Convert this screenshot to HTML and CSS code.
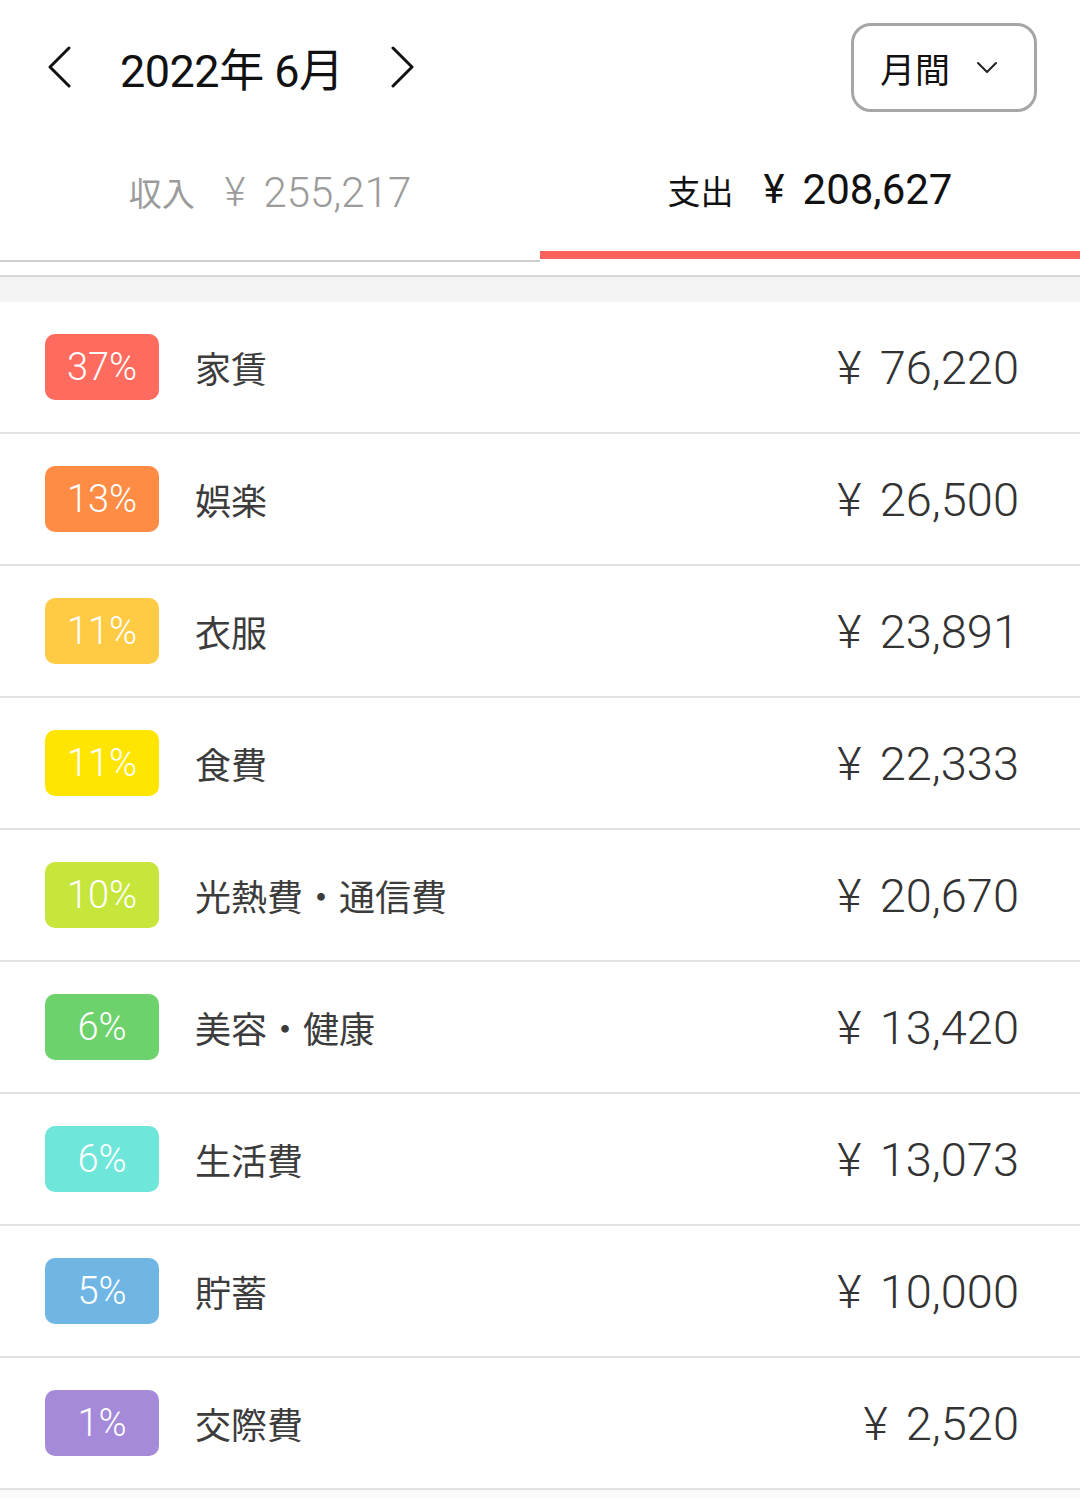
FILE: index.html
```html
<!DOCTYPE html>
<html lang="ja">
<head>
<meta charset="utf-8">
<title>支出</title>
<link rel="stylesheet" href="styles.css">
</head>
<body>
<div class="app">
  <header class="header">
    <div class="month-nav">
      <button class="nav-btn" aria-label="前月">
        <svg width="26" height="42" viewBox="0 0 26 42"><polyline points="23,2 4,21 23,40" fill="none" stroke="#111" stroke-width="3" stroke-linecap="round" stroke-linejoin="round"/></svg>
      </button>
      <div class="month-title">2022年 6月</div>
      <button class="nav-btn" aria-label="翌月">
        <svg width="26" height="42" viewBox="0 0 26 42"><polyline points="3,2 22,21 3,40" fill="none" stroke="#111" stroke-width="3" stroke-linecap="round" stroke-linejoin="round"/></svg>
      </button>
    </div>
    <button class="period-select">
      <span class="period-label">月間</span>
      <svg width="22" height="13" viewBox="0 0 22 13"><polyline points="2,2 11,11 20,2" fill="none" stroke="#222" stroke-width="2" stroke-linecap="round" stroke-linejoin="round"/></svg>
    </button>
  </header>

  <nav class="tabs">
    <div class="tab">
      <span class="tab-label">収入</span><span class="yen tab-yen">¥</span><span class="tab-amount">255,217</span>
    </div>
    <div class="tab tab-active">
      <span class="tab-label">支出</span><span class="yen tab-yen">¥</span><span class="tab-amount">208,627</span>
    </div>
  </nav>

  <div class="divider-band"></div>

  <ul class="list">
    <li class="row"><span class="badge c1">37%</span><span class="name">家賃</span><span class="amount"><span class="yen">¥</span>76,220</span></li>
    <li class="row"><span class="badge c2">13%</span><span class="name">娯楽</span><span class="amount"><span class="yen">¥</span>26,500</span></li>
    <li class="row"><span class="badge c3">11%</span><span class="name">衣服</span><span class="amount"><span class="yen">¥</span>23,891</span></li>
    <li class="row"><span class="badge c4">11%</span><span class="name">食費</span><span class="amount"><span class="yen">¥</span>22,333</span></li>
    <li class="row"><span class="badge c5">10%</span><span class="name">光熱費・通信費</span><span class="amount"><span class="yen">¥</span>20,670</span></li>
    <li class="row"><span class="badge c6">6%</span><span class="name">美容・健康</span><span class="amount"><span class="yen">¥</span>13,420</span></li>
    <li class="row"><span class="badge c7">6%</span><span class="name">生活費</span><span class="amount"><span class="yen">¥</span>13,073</span></li>
    <li class="row"><span class="badge c8">5%</span><span class="name">貯蓄</span><span class="amount"><span class="yen">¥</span>10,000</span></li>
    <li class="row"><span class="badge c9">1%</span><span class="name">交際費</span><span class="amount"><span class="yen">¥</span>2,520</span></li>
  </ul>
  <div class="footer-band"></div>
</div>
</body>
</html>
```

FILE: styles.css
```css
* {
  box-sizing: border-box;
}

html, body {
  margin: 0;
  padding: 0;
  background: #ffffff;
}

body {
  font-family: "Roboto", "Noto Sans CJK JP", sans-serif;
  color: #111;
}

.app {
  width: 1080px;
}

.header {
  height: 134px;
  display: flex;
  align-items: center;
  justify-content: space-between;
  padding: 0 43px 0 46px;
}

.month-nav {
  display: flex;
  align-items: center;
}

.nav-btn {
  background: none;
  border: none;
  padding: 0;
  margin: 0;
  width: 26px;
  height: 42px;
  display: flex;
  align-items: center;
  justify-content: center;
}

.month-title {
  font-size: 45px;
  font-weight: 400;
  color: #111;
  margin: 0 46px 0 48px;
  letter-spacing: -0.5px;
}

.period-select {
  width: 186px;
  height: 89px;
  border: 3px solid #a6a6a6;
  border-radius: 20px;
  background: #fff;
  display: flex;
  align-items: center;
  justify-content: space-between;
  padding: 0 36px 0 26px;
  font-family: "Roboto", "Noto Sans CJK JP", sans-serif;
}

.period-label {
  font-size: 35px;
  color: #111;
}

.tabs {
  display: flex;
  height: 128px;
  align-items: flex-start;
}

.tab {
  flex: 1;
  height: 128px;
  display: flex;
  align-items: center;
  justify-content: center;
  color: #9b9b9b;
  border-bottom: 2px solid #cfcfcf;
  padding-bottom: 10px;
}

.tab-active {
  height: 125px;
  color: #111;
  border-bottom: 8px solid #f9625a;
  padding-bottom: 6px;
}

.tab-label {
  font-size: 33px;
  margin-right: 30px;
}

.yen {
  font-weight: 300;
}

.tab-yen {
  font-size: 40px;
  margin-right: 18px;
}

.tab-amount {
  font-size: 42px;
  font-weight: 300;
}

.tab-active .tab-amount,
.tab-active .tab-yen {
  font-weight: 400;
}

.divider-band {
  margin-top: 13px;
  height: 27px;
  border-top: 2px solid #d6d6d6;
  background: #f4f4f4;
}

.list {
  list-style: none;
  margin: 0;
  padding: 0;
}

.row {
  height: 132px;
  border-bottom: 2px solid #e2e2e2;
  display: flex;
  align-items: center;
  padding: 0 61px 0 45px;
}

.badge {
  width: 114px;
  height: 66px;
  border-radius: 10px;
  color: #fff;
  font-size: 38px;
  font-weight: 300;
  display: flex;
  align-items: center;
  justify-content: center;
  flex-shrink: 0;
}

.name {
  margin-left: 36px;
  font-size: 36px;
  color: #3c3c3c;
  flex: 1;
}

.amount {
  font-size: 47px;
  font-weight: 300;
  color: #333;
}

.amount .yen {
  margin-right: 18px;
}

.c1 { background: #ff6b5e; }
.c2 { background: #ff8c45; }
.c3 { background: #ffcb45; }
.c4 { background: #ffe500; }
.c5 { background: #c6e63c; }
.c6 { background: #6dd26b; }
.c7 { background: #6fe6da; }
.c8 { background: #70b6e4; }
.c9 { background: #a48ad9; }

.footer-band {
  height: 20px;
  background: #fafafa;
}
```
